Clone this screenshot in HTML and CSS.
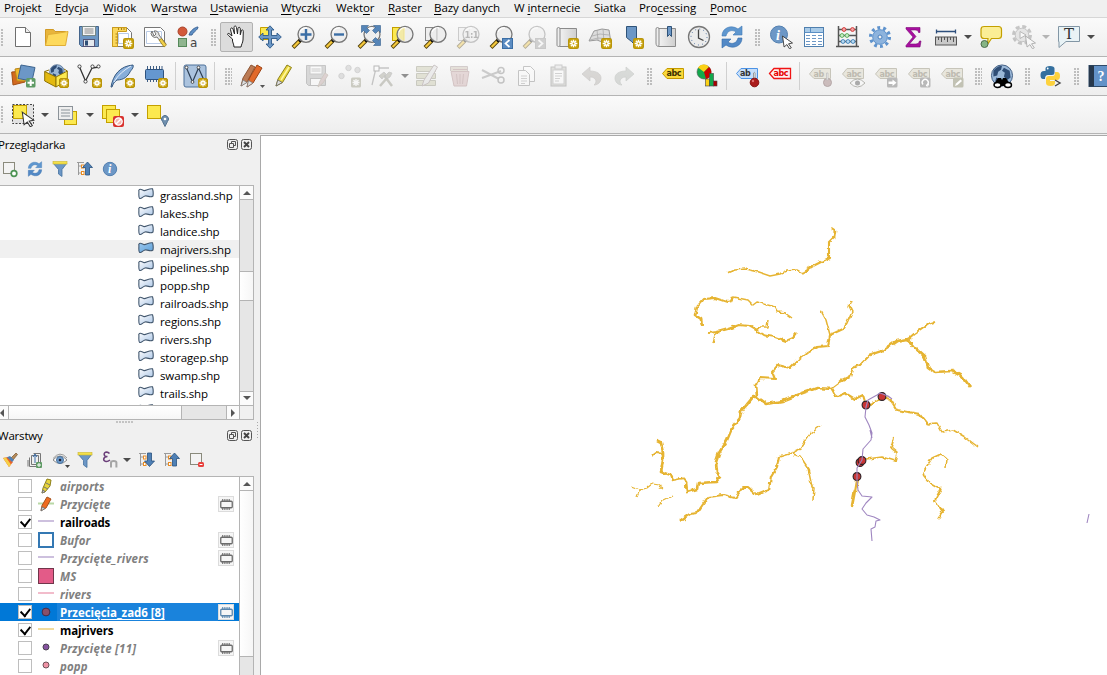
FILE: index.html
```html
<!DOCTYPE html>
<html lang="pl">
<head>
<meta charset="utf-8">
<title>QGIS</title>
<link rel="stylesheet" href="styles.css">
</head>
<body>
<svg class="defs" width="0" height="0">
  <defs>
    <linearGradient id="polyG" x1="0" y1="0" x2="1" y2="1"><stop offset="0" stop-color="#fdfdfe"/><stop offset="1" stop-color="#a9c5e6"/></linearGradient>
    <linearGradient id="polyB" x1="0" y1="0" x2="1" y2="1"><stop offset="0" stop-color="#9cc8ee"/><stop offset="1" stop-color="#5c9fd8"/></linearGradient>
    <linearGradient id="greyG" x1="0" y1="0" x2="1" y2="0"><stop offset="0" stop-color="#f2f2f2"/><stop offset="1" stop-color="#cfcfcf"/></linearGradient>
    <filter id="rough" x="-2%" y="-2%" width="104%" height="104%"><feTurbulence type="fractalNoise" baseFrequency="0.16" numOctaves="2" seed="4"/><feDisplacementMap in="SourceGraphic" scale="4.500" xChannelSelector="R" yChannelSelector="G"/></filter>
  </defs>
  <symbol id="star" viewBox="0 0 10 10"><rect x=".5" y=".5" width="9" height="9" rx="1.500" fill="#c8a20c" stroke="#b8940a"/><path d="M5 1.500v7M1.500 5h7M2.600 2.600l4.800 4.800M7.400 2.600L2.600 7.400" stroke="#fff" stroke-width="1.300"/><circle cx="5" cy="5" r=".8" fill="#c8a20c"/></symbol>
  <symbol id="mag" viewBox="0 0 24 24"><path d="M9.500 15L2 22.500" stroke="#55430c" stroke-width="4"/><path d="M8.500 16L2.600 22" stroke="#f5c93c" stroke-width="2.300"/><circle cx="9.300" cy="15.300" r="1.900" fill="#111"/><circle cx="15" cy="9.300" r="8" fill="#ececec" fill-opacity=".85" stroke="#777" stroke-width="1.300"/><path d="M9 7a7 7 0 0 1 7-4" stroke="#fff" stroke-width="1.200" fill="none"/></symbol>
  <symbol id="refresh" viewBox="0 0 24 24"><path d="M2 11C2 3 11-1 18 4L22 1v9h-9l3-3c-4-3-9-1-10 4z" fill="#5f97cf" stroke="#3f78b6" stroke-width=".6"/><path d="M22 13c0 8-9 12-16 7l-4 3v-9h9l-3 3c4 3 9 1 10-4z" fill="#5389c6" stroke="#2f69a8" stroke-width=".6"/></symbol>
  <symbol id="tag" viewBox="0 0 24 24"><path d="M1.500 10L6 4.500h16.500v10H6z" fill="#e8e6dd" stroke="#c7c5ba"/></symbol>
  <symbol id="poly" viewBox="0 0 16 12"><path d="M.8 2.200C2.500-.2 3.800 2.300 6 2.600S11 .2 14.500.8Q15.600 4 15 8C12 10.300 10 7.200 7 8S3.500 11.500 1.500 10.300C.2 9 1.200 5 .8 2.200Z" stroke="#42576e" stroke-width="1.100"/></symbol>
  <symbol id="chip" viewBox="0 0 12 10"><rect x=".7" y="2" width="10.600" height="6" rx="1" fill="none" stroke="currentColor" stroke-width="1.200"/><path d="M2.500 0v2M4.500 0v2M6.500 0v2M8.500 0v2M2.500 8v2M4.500 8v2M6.500 8v2M8.500 8v2" stroke="currentColor"/></symbol>
  <symbol id="float" viewBox="0 0 11 11"><rect x=".5" y=".5" width="10" height="10" rx="2" fill="none" stroke="#555"/><path d="M4.500 4.500v-2h4v4h-2M2.500 4.500h4v4h-4z" fill="none" stroke="#555"/></symbol>
  <symbol id="close" viewBox="0 0 11 11"><rect x=".5" y=".5" width="10" height="10" rx="2" fill="none" stroke="#555"/><path d="M3 3l5 5M8 3l-5 5" stroke="#444" stroke-width="1.900"/></symbol>
  <symbol id="funnel" viewBox="0 0 16 16"><path d="M1 2h14L10 8.500V15.500L6.500 13V8.500Z" fill="#6c97c6" stroke="#44719f" stroke-width=".8"/><rect x="1" y=".5" width="14" height="2.500" fill="#f4e04a" stroke="#cdb72a" stroke-width=".6"/></symbol>
  <symbol id="treeico" viewBox="0 0 16 16"><path d="M1.500 1v13M1.500 5h4M1.500 12h4M0 1.500h7" fill="none" stroke="#9a9a9a"/><rect x="4.500" y="4" width="2.500" height="3" fill="#fff" stroke="#e98b22"/><rect x="4.500" y="10.500" width="2.500" height="3" fill="#fff" stroke="#e98b22"/></symbol>
  <symbol id="cursor" viewBox="0 0 12 14"><path d="M1 1l10 7-4 .8 2.800 4-1.800 1-2.600-4.200L2.600 12Z" fill="#fff" stroke="#333" stroke-width=".9"/></symbol>
  <symbol id="globe" viewBox="0 0 24 24"><circle cx="12" cy="12" r="11" fill="#9bb8d8" stroke="#3d5a80"/><path d="M3 7c4-5 7-5 9-5l-1 4-3 2-1 4-4 1zM14 4l6 3 1 7-4 3-3-4 1-4-3-2zM6 14l5 2-2 5-4-3z" fill="#2f4d75"/></symbol>
</svg>

<nav class="menubar">
  <span>Pro<u>j</u>ekt</span><span><u>E</u>dycja</span><span><u>W</u>idok</span><span>W<u>a</u>rstwa</span><span><u>U</u>stawienia</span><span><u>W</u>tyczki</span><span>Wekt<u>o</u>r</span><span><u>R</u>aster</span><span><u>B</u>azy danych</span><span>W <u>i</u>nternecie</span><span>Siatka</span><span>Pro<u>c</u>essing</span><span><u>P</u>omoc</span>
</nav>

<div class="toolbar">
  <i class="grip first"></i>
  <b class="tb"><svg viewBox="0 0 24 24"><path d="M4.500 2.500h10l5 5v14h-15z" fill="#fff" stroke="#6e6e6e"/><path d="M14.500 2.500v5h5" fill="#eee" stroke="#6e6e6e"/></svg></b>
  <b class="tb"><svg viewBox="0 0 24 24"><path d="M1.500 20.500V4.500h8l1.500 2h10.500v3" fill="#e8b53c" stroke="#d19a25"/><path d="M1.500 20.500L4 9.500l8-1 12-2-2.500 14z" fill="#fdd95c" stroke="#e0ae35"/></svg></b>
  <b class="tb"><svg viewBox="0 0 24 24"><path d="M2.500 1.500h19v20h-17l-2-2z" fill="#6d97c5" stroke="#45658c"/><rect x="5.500" y="1.500" width="13" height="9" fill="#f5f5f5" stroke="#788"/><path d="M7.500 4h9M7.500 6h9M7.500 8h9" stroke="#888"/><rect x="6.500" y="14.500" width="11" height="7" fill="#e4e9ee" stroke="#557"/><rect x="8" y="15.500" width="3" height="5" fill="#2f4f77"/></svg></b>
  <b class="tb"><svg viewBox="0 0 24 24"><path d="M2.500 2.500h14l5 5v14h-19z" fill="#fff" stroke="#777"/><path d="M8.500 8.500h10v10h-10z" fill="#fff" stroke="#b9cbe6"/><path d="M2.500 2.500h14v4h-9v15h-5z" fill="#fbd75a" stroke="#c99b1c"/><path d="M5.500 9h2M5.500 12h2M5.500 15h2M5.500 18h2M8.500 3v2M11.500 3v2M14 3v2" stroke="#a8801a"/><use href="#star" x="13" y="13" width="11" height="11"/></svg></b>
  <b class="tb"><svg viewBox="0 0 24 24"><path d="M1.500 2.500h16l4 4v15h-20z" fill="#fff" stroke="#777"/><path d="M3.500 6.500h15v12h-15z" fill="none" stroke="#b9cbe6"/><path d="M9 6a4 4 0 0 0 5 6l7 9 2-2-7-9a4 4 0 0 0-5-4l2 3-2 2z" fill="#e6e6e6" stroke="#666" stroke-width=".9"/><path d="M16 15l5 7 2.500-2-5-6.500z" fill="#f0cf4a" stroke="#8e7417" stroke-width=".7"/></svg></b>
  <b class="tb"><svg viewBox="0 0 24 24"><circle cx="6.500" cy="6.500" r="4.500" fill="#d2593a" stroke="#a9442b"/><path d="M13 10c1-4 6-8 9-8 0 3-5 5-6 8z" fill="#5f8fc5" stroke="#3c6597"/><rect x="2.500" y="13.500" width="8" height="8" fill="#8fb58f" stroke="#55895a"/><text x="14" y="21.500" class="sa">a</text></svg></b>
  <i class="grip"></i>
  <b class="tb pressed"><svg viewBox="0 0 24 24"><path d="M7.500 14L3.500 10.500C2 9.500 2.500 8 4 8.500L7 11 5.500 4.500c0-2 2-2 2.500-.3L9.500 9 9 2.500c0-2 2.200-2 2.500 0L12.500 9l.5-5.500c.3-1.800 2.300-1.500 2.300.3l0 6 1-4c.5-1.500 2.200-1 2 .5L18 15c-.3 3-1.500 4-2 7H9c0-3-2-5-1.500-8z" fill="#fff" stroke="#222"/></svg></b>
  <b class="tb"><svg viewBox="0 0 24 24"><path d="M2.500 2.500h11v12h-11z" fill="#fce94f" stroke="#c4a000"/><path d="M12 .8l4 4.200h-2.500v5.500H19V8l4.300 4L19 16v-2.500h-5.500V19H16l-4 4.200L8 19h2.500v-5.500H5V16L.7 12 5 8v2.500h5.500V5H8z" fill="#6c97c6" stroke="#2e5a8a" stroke-width=".9"/></svg></b>
  <b class="tb"><svg viewBox="0 0 24 24"><use href="#mag" width="24" height="24"/><path d="M15 4v11M9.500 9.500h11" stroke="#3b6ea5" stroke-width="2.400"/></svg></b>
  <b class="tb"><svg viewBox="0 0 24 24"><use href="#mag" width="24" height="24"/><path d="M10 9.500h10" stroke="#3b6ea5" stroke-width="2.400"/></svg></b>
  <b class="tb"><svg viewBox="0 0 24 24"><use href="#mag" width="24" height="24"/><g fill="#5585b8" stroke="#365f8d" stroke-width=".6"><path d="M4.500.5h7l-2 2 3 3-3 3-3-3-2 2z"/><path d="M23.500.5h-7l2 2-3 3 3 3 3-3 2 2z"/><path d="M23.500 20.500h-7l2-2-3-3 3-3 3 3 2-2z"/></g></svg></b>
  <b class="tb"><svg viewBox="0 0 24 24"><rect x="2.500" y="2.500" width="11" height="13" fill="#fce94f" stroke="#c4a000"/><use href="#mag" width="24" height="24"/><path d="M15 3h-2a7 7 0 0 0-1 12l3 1z" fill="#fce94f" opacity=".35"/></svg></b>
  <b class="tb"><svg viewBox="0 0 24 24"><rect x="2.500" y="2.500" width="11" height="13" fill="#eee" stroke="#888"/><use href="#mag" width="24" height="24"/><path d="M14 3v12.500" fill="none" stroke="#c4c4c4"/></svg></b>
  <b class="tb off"><svg viewBox="0 0 24 24"><rect x="2.500" y="2.500" width="11" height="13" fill="#eee" stroke="#888"/><use href="#mag" width="24" height="24"/><text x="8.500" y="13" class="oo">1:1</text></svg></b>
  <b class="tb"><svg viewBox="0 0 24 24"><use href="#mag" width="24" height="24"/><rect x="13.500" y="13.500" width="10" height="10" fill="#5b8cc2" stroke="#3b6ea5"/><path d="M20.500 15l-4 3.500 4 3.500" fill="none" stroke="#fff" stroke-width="1.700"/></svg></b>
  <b class="tb off"><svg viewBox="0 0 24 24"><use href="#mag" width="24" height="24"/><rect x="13.500" y="13.500" width="10" height="10" fill="#999" stroke="#888"/><path d="M16.500 15l4 3.500-4 3.500" fill="none" stroke="#fff" stroke-width="1.700"/></svg></b>
  <b class="tb"><svg viewBox="0 0 24 24"><path d="M4.500 3.500h17v18h-17z" fill="url(#greyG)" stroke="#8b8b8b"/><path d="M2 16V4a1.500 1.500 0 0 1 3 0v16c0 2-3 2-3 0z" fill="#eee" stroke="#8b8b8b"/><use href="#star" x="13" y="13" width="11" height="11"/></svg></b>
  <b class="tb"><svg viewBox="0 0 24 24"><path d="M1 16L6 6l8-2 7 1 2 13-9-1-5-2z" fill="#ddd" stroke="#999"/><path d="M4 11l8-2 9 1M9 5l1 10M15 4l1 13M2 15l8-2 12 1" stroke="#aaa" fill="none" stroke-width=".8"/><use href="#star" x="13" y="13" width="11" height="11"/></svg></b>
  <b class="tb"><svg viewBox="0 0 24 24"><path d="M5.500 1.500h10v20l-5-5-5-4z" fill="#6c97c6" stroke="#2f5379"/><use href="#star" x="12" y="13" width="11" height="11"/></svg></b>
  <b class="tb"><svg viewBox="0 0 24 24"><path d="M4.500 3.500h17v18h-17z" fill="url(#greyG)" stroke="#8b8b8b"/><path d="M2 18V4a1.500 1.500 0 0 1 3 0v16c0 2-3 2-3-2z" fill="#eee" stroke="#8b8b8b"/><path d="M13.500 1.500h4v10l-2-2-2 2z" fill="#6c97c6" stroke="#2f5379"/></svg></b>
  <b class="tb"><svg viewBox="0 0 24 24"><circle cx="12" cy="12" r="10.500" fill="#ececec" stroke="#777" stroke-width="1.300"/><circle cx="12" cy="12" r="8" fill="none" stroke="#4c6f9f" stroke-dasharray="1 3.190"/><path d="M11.500 4.500V13l5 2.500" fill="none" stroke="#444" stroke-width="1.300"/></svg></b>
  <b class="tb"><svg viewBox="0 0 24 24"><use href="#refresh" width="24" height="24"/></svg></b>
  <i class="grip"></i>
  <b class="tb"><svg viewBox="0 0 24 24"><circle cx="10" cy="9.500" r="8.500" fill="#6c97c6" stroke="#5380b0"/><text x="7" y="14.500" class="inf">i</text><use href="#cursor" x="12.500" y="10" width="12" height="14"/></svg></b>
  <b class="tb"><svg viewBox="0 0 24 24"><rect x="2.500" y="2.500" width="19" height="19" fill="#fff" stroke="#4f7fae"/><rect x="3" y="3" width="18" height="4" fill="#a9cbe8"/><path d="M2.500 7.500h19M8.500 3v4" stroke="#5b8fc4"/><path d="M4 10.500h4M10 10.500h4M16 10.500h4M4 13.500h4M10 13.500h4M16 13.500h4M4 16.500h4M10 16.500h4M16 16.500h4M4 19.500h4M10 19.500h4M16 19.500h4" stroke="#6d98c6"/></svg></b>
  <b class="tb"><svg viewBox="0 0 24 24"><path d="M3.500 1v20M21.500 1v20M3 4.500h19M3 10.500h19M3 16.500h19M1 21.500h23" stroke="#555" stroke-width="1.500"/><g fill="#f6a6a6" stroke="#d23c3c"><circle cx="9" cy="4.500" r="1.900"/><circle cx="17.500" cy="4.500" r="1.900"/></g><g fill="#c8f0c8" stroke="#5fae5f"><circle cx="7" cy="10.500" r="1.900"/><circle cx="12" cy="10.500" r="1.900"/></g><g fill="#b9dcf5" stroke="#4a88bb"><circle cx="8" cy="16.500" r="1.900"/><circle cx="13" cy="16.500" r="1.900"/><circle cx="18" cy="16.500" r="1.900"/></g></svg></b>
  <b class="tb"><svg viewBox="0 0 24 24"><circle cx="12" cy="12" r="9.300" fill="none" stroke="#5f93cd" stroke-width="3.500" stroke-dasharray="2.800 3.043"/><circle cx="12" cy="12" r="7.300" fill="#8db3dd" stroke="#5f93cd" stroke-width="1"/><circle cx="12" cy="12" r="2" fill="#f2f2f2" stroke="#4a80bf"/></svg></b>
  <b class="tb"><svg viewBox="0 0 24 24"><path d="M5 2.500h14v5h-1.500c-.5-2-1.500-2.500-4-2.500H9.500l5.500 6.500-6.500 7.500h6c2.500 0 3.500-1 4-3H20l-1 6H5v-1.500L12 12 5 4z" fill="#a80fa0" stroke="#7b0a76" stroke-width=".6"/></svg></b>
  <b class="tb"><svg viewBox="0 0 24 24"><path d="M2 6.500h20M2.500 4.500v4M21.500 4.500v4" stroke="#2e4f7c" stroke-width="1.300"/><rect x="1.500" y="12" width="21" height="8" fill="#c9c9c9" stroke="#555"/><path d="M4.500 12v3M7.500 12v5M10.500 12v3M13.500 12v5M16.500 12v3M19.500 12v5" stroke="#555"/></svg></b>
  <i class="arr"></i>
  <b class="tb"><svg viewBox="0 0 24 24"><path d="M4.500 1.500h15q3 0 3 3v6q0 3-3 3h-7l-4 6 .5-6h-4q-3 0-3-3v-6q0-3 3-3z" fill="#fbee95" stroke="#c4a000" stroke-width="1.200"/><circle cx="5.500" cy="19" r="3.500" fill="#86b586" stroke="#4e6e4e"/></svg></b>
  <b class="tb off"><svg viewBox="0 0 24 24"><circle cx="10" cy="10" r="8.500" fill="none" stroke="#777" stroke-width="3" stroke-dasharray="4 2.670"/><circle cx="10" cy="10" r="6.800" fill="#ccc" stroke="#777"/><path d="M8 6.500l6 3.500-6 3.500z" fill="#fff" stroke="#555"/><use href="#cursor" x="12.500" y="10" width="12" height="14"/></svg></b>
  <i class="arr dim"></i>
  <b class="tb"><svg viewBox="0 0 24 24"><path d="M1.500 1.500h21v15H9l-7 6v-6h-.5z" fill="#e9f3f6" stroke="#8296a5"/><text x="7" y="14" class="tt">T</text></svg></b>
  <i class="arr"></i>
</div>

<div class="toolbar">
  <i class="grip first"></i>
  <b class="tb"><svg viewBox="0 0 24 24"><path d="M.7 8l12-1 1.300 11-12 3z" fill="#d2691e" stroke="#a34e12"/><path d="M4 5l12-2v14H6z" fill="#f0b92c" stroke="#b98416"/><path d="M10 1l14 2.500-3 13.500-14-2.500z" fill="#6c97c6" stroke="#3d648f"/><rect x="15" y="14" width="9.500" height="9.500" rx="1.500" fill="#5f9b65"/><path d="M19.700 15.500v6.500M16.500 18.700H23" stroke="#fff" stroke-width="2"/></svg></b>
  <b class="tb"><svg viewBox="0 0 24 24"><use href="#globe" x="5" y="0" width="16" height="16"/><path d="M.7 7.500L12 13v10L.7 17z" fill="#e3b90f" stroke="#8f7406"/><path d="M12 13l11.300-6v9L12 23z" fill="#fce94f" stroke="#8f7406"/><path d="M.7 7.500L5 6M23.300 7L20 5" stroke="#8f7406"/><use href="#star" x="15" y="14" width="10" height="10"/></svg></b>
  <b class="tb"><svg viewBox="0 0 24 24"><path d="M2.500 3l6 14 6.500-13 7-1" fill="none" stroke="#333" stroke-width="1.300"/><g fill="#fff" stroke="#444"><circle cx="2.500" cy="2.500" r="1.600"/><circle cx="8.500" cy="17.500" r="1.600"/><circle cx="15.500" cy="2.500" r="1.600"/><circle cx="21.500" cy="2.500" r="1.600"/></g><use href="#star" x="15" y="14" width="10" height="10"/></svg></b>
  <b class="tb"><svg viewBox="0 0 24 24"><path d="M1 23C3 11 10 2 23 1c1 3-2 5-3 7-2 4-6 8-13 8-3 2-4 4-5 7z" fill="#87aeda" stroke="#34577f"/><path d="M4 18C8 11 14 6 21 2" fill="none" stroke="#e5eefa"/><use href="#star" x="15" y="14" width="10" height="10"/></svg></b>
  <b class="tb"><svg viewBox="0 0 24 24"><path d="M4.500 2v16M7.500 2v16M10.500 2v16M13.500 2v16M16.500 2v16M19 2v14" stroke="#405f85"/><rect x="2.500" y="5.500" width="18" height="10" rx="1" fill="#6597cf" stroke="#2e527e"/><use href="#star" x="15" y="14" width="10" height="10"/></svg></b>
  <i class="sep"></i>
  <b class="tb m-1"><svg viewBox="0 0 24 24"><rect x="1" y="1" width="22" height="22" rx="2" fill="#abc3de" stroke="#4d7099"/><path d="M3.500 4l6 14 6-14 5 11" fill="none" stroke="#2d3e53" stroke-width="1.200"/><g fill="#fff" stroke="#333" stroke-width=".8"><circle cx="3.500" cy="3.500" r="1.400"/><circle cx="9.500" cy="18" r="1.400"/><circle cx="15.500" cy="3.500" r="1.400"/></g><use href="#star" x="15" y="14" width="10" height="10"/></svg></b>
  <i class="sep s7"></i>
  <i class="grip g17"></i>
  <b class="tb"><svg viewBox="0 0 24 24"><path d="M1 22l2-8L11 1l4 2-8 15z" fill="#bb7a54" stroke="#8d5635"/><path d="M7 23l2-8L17 1l5 3-9 15z" fill="#e2692a" stroke="#9c4314"/><path d="M1 22l2-6 4 2.500zM7 23l1.500-6.500L13 19z" fill="#ddd" stroke="#777" stroke-width=".7"/><path d="M20 21h5l-2.500 3z" fill="#555"/></svg></b>
  <b class="tb m-1"><svg viewBox="0 0 24 24"><path d="M4 22l2-7L15 1l4.500 2.500-9 15z" fill="#e8d53c" stroke="#8e811b"/><path d="M9 16L17 3" stroke="#fff6a0" stroke-width="1.500"/><path d="M4 22l1.800-6 4.500 2.500z" fill="#ddd" stroke="#666" stroke-width=".8"/></svg></b>
  <b class="tb off"><svg viewBox="0 0 24 24"><path d="M1.500 1.500h19v20h-17l-2-2z" fill="#aaa" stroke="#777"/><rect x="5" y="2" width="12" height="8" fill="#fff" stroke="#888"/><path d="M6.500 5h9M6.500 7h9" stroke="#888"/><rect x="5.500" y="14.500" width="11" height="7" fill="#fff" stroke="#777"/><path d="M13 23l2-6 5-8 3 2-5 8z" fill="#b99a9a" stroke="#987"/></svg></b>
  <b class="tb off"><svg viewBox="0 0 24 24"><g fill="#bbb" stroke="#999"><circle cx="10.500" cy="4" r="2.700"/><circle cx="19.500" cy="6" r="2.700"/><circle cx="3.500" cy="12" r="2.700"/></g><rect x="13" y="13.500" width="10" height="10" rx="1.500" fill="#8d8d75"/><path d="M18 15v7M14.500 18.500h7M15.500 16l5 5M20.500 16l-5 5" stroke="#fff" stroke-width="1.300"/></svg></b>
  <b class="tb off"><svg viewBox="0 0 24 24"><path d="M1 21L5 4h13" fill="none" stroke="#777" stroke-width="1.300"/><rect x="3" y="2" width="5" height="5" fill="#fff" stroke="#555"/><path d="M9 22l7-8M12 10l9 12" fill="none" stroke="#888878" stroke-width="2.500"/><path d="M8 12l5-4 2 2-4 5zM14 12l4-4 3 1-2 4-3 2z" fill="#99998a" stroke="#777" stroke-width=".7"/></svg></b>
  <i class="arr mid"></i>
  <b class="tb off"><svg viewBox="0 0 24 24"><path d="M1.500 2.500h19v5h-19zM1.500 9.500h19v5h-19zM1.500 16.500h19v5h-19z" fill="#c3c3a3" stroke="#888870"/><path d="M7 22l2-6L19 1l3.500 2-9 16z" fill="#ddd" stroke="#877"/></svg></b>
  <b class="tb off"><svg viewBox="0 0 24 24"><path d="M2.500 7V2.500h17V7" fill="#c9bba9" stroke="#988"/><path d="M3 7.500h18l-2.500 14.500H6z" fill="#cba8a8" stroke="#a07878"/><path d="M8.500 10l1 10M12 10v10M15.500 10l-1 10M5 5.500h14" stroke="#a07878"/></svg></b>
  <b class="tb off"><svg viewBox="0 0 24 24"><path d="M1 6l17 9M1 14L20 7" stroke="#888" stroke-width="2"/><circle cx="20" cy="6.500" r="3" fill="none" stroke="#777" stroke-width="1.500"/><circle cx="20" cy="16" r="3" fill="none" stroke="#777" stroke-width="1.500"/></svg></b>
  <b class="tb off"><svg viewBox="0 0 24 24"><path d="M9.500 2.500h7l4 4v11h-11z" fill="#fff" stroke="#777"/><path d="M4.500 6.500h7l4 4v11h-11z" fill="#fff" stroke="#777"/><path d="M7 12h6M7 14.500h6M7 17h6M7 19.500h4" stroke="#999"/></svg></b>
  <b class="tb off"><svg viewBox="0 0 24 24"><rect x="4" y="3" width="15" height="19" fill="#bdbdb5" stroke="#777"/><rect x="6" y="6" width="11" height="14" fill="#fff" stroke="#999"/><rect x="8" y="1" width="7" height="4" fill="#ddd" stroke="#888"/><path d="M8 9.500h7M8 12h7M8 14.500h5M8 17h4" stroke="#999"/></svg></b>
  <b class="tb off"><svg viewBox="0 0 24 24"><path d="M2 10l8-7v4c7 0 11 3 11 7s-3 7-7 7c3-2 3-8-4-8v4z" fill="#aba7a2" stroke="#8e8a86" stroke-width=".7"/></svg></b>
  <b class="tb off"><svg viewBox="0 0 24 24"><path d="M21 10l-8-7v4C6 7 2 10 2 14s3 7 7 7c-3-2-3-8 4-8v4z" fill="#aab0aa" stroke="#8e928e" stroke-width=".7"/></svg></b>
  <i class="grip g15"></i>
  <b class="tb"><svg viewBox="0 0 24 24"><path d="M1.500 9.500L6 4.500h16.500v10H6z" fill="#fad93b" stroke="#c49a00"/><text x="5.500" y="12.300" class="abc" fill="#3b2f00">abc</text></svg></b>
  <b class="tb p1"><svg viewBox="0 0 24 24"><circle cx="9" cy="8" r="7" fill="#12a84c" stroke="#555" stroke-width=".6"/><path d="M9 8L3 3.500A7 7 0 0 1 14 3z" fill="#fcd116"/><path d="M9 8l5-5a7 7 0 0 1-3 12z" fill="#c80000"/><g stroke="#444" stroke-width=".6"><rect x="10.500" y="15" width="4" height="7" fill="#fcd116"/><rect x="14.500" y="9.500" width="4" height="12.500" fill="#12a84c"/><rect x="18.500" y="17" width="3.500" height="5" fill="#a00"/></g></svg></b>
  <i class="sep s7"></i>
  <b class="tb"><svg viewBox="0 0 24 24"><path d="M1.500 9.500L6 4.500h16.500v10H6z" fill="#c6defa" stroke="#4c93e6"/><text x="5" y="12.300" class="abc" fill="#333">ab</text><path d="M18.500 9q1-1.500 1.500 0v7h-1.500z" fill="#fff" stroke="#777" stroke-width=".7"/><circle cx="19.500" cy="18.500" r="4.300" fill="#ab1c1c" stroke="#811"/><circle cx="18" cy="17" r="1.200" fill="#e07070"/></svg></b>
  <b class="tb"><svg viewBox="0 0 24 24"><path d="M1.500 9.500L6 4.500h16.500v10H6z" fill="#fdf2f2" stroke="#f01414" stroke-width="1.300"/><text x="5.500" y="12.300" class="abc" fill="#e80000">abc</text></svg></b>
  <i class="sep s7"></i>
  <b class="tb"><svg viewBox="0 0 24 24"><use href="#tag" width="24" height="24"/><text x="5.500" y="12.500" class="abc" fill="#bdbab0">ab</text><circle cx="19.500" cy="18.500" r="4" fill="#cbbcbc" stroke="#b5a8a8"/><path d="M18.500 9h1.500v7h-1.500z" fill="#eee" stroke="#bbb" stroke-width=".7"/></svg></b>
  <b class="tb"><svg viewBox="0 0 24 24"><use href="#tag" width="24" height="24"/><text x="5.500" y="12.500" class="abc" fill="#bdbab0">abc</text><path d="M9 19q7.500-8 15 0-7.500 8-15 0z" fill="#f6f6f6" stroke="#b5b5b0"/><circle cx="16.500" cy="19" r="2.500" fill="#aaa"/></svg></b>
  <b class="tb"><svg viewBox="0 0 24 24"><use href="#tag" width="24" height="24"/><text x="5.500" y="12.500" class="abc" fill="#bdbab0">abc</text><rect x="13" y="13.500" width="10.500" height="10" rx="1.500" fill="#b9b9b9"/><path d="M14.500 17.500h4v-2l4 3.300-4 3.200v-2h-4z" fill="#fff"/></svg></b>
  <b class="tb"><svg viewBox="0 0 24 24"><use href="#tag" width="24" height="24"/><text x="5.500" y="12.500" class="abc" fill="#bdbab0">abc</text><rect x="13" y="13.500" width="10.500" height="10" rx="1.500" fill="#b9b9b9"/><path d="M16 20.500a3 3 0 1 1 4.500 0v2M22 20.500l-3 1" fill="none" stroke="#fff" stroke-width="1.400"/></svg></b>
  <b class="tb"><svg viewBox="0 0 24 24"><use href="#tag" width="24" height="24"/><text x="5.500" y="12.500" class="abc" fill="#bdbab0">abc</text><rect x="13" y="13.500" width="10.500" height="10" rx="1.500" fill="#c2c2b4"/><path d="M15 22l1-2.500 4.500-4 1.500 1.500-4.500 4z" fill="#fff"/></svg></b>
  <i class="grip g17"></i>
  <b class="tb"><svg viewBox="0 0 24 24"><use href="#globe" x="0" y="0" width="24" height="23"/><path d="M4 20l4-6h3l1 2 1-2h3l4 6-2 2H6z" fill="#000"/><ellipse cx="7.500" cy="21" rx="3.500" ry="2.500" fill="#fff" stroke="#000" stroke-width="1.400"/><ellipse cx="18" cy="21" rx="3.500" ry="2.500" fill="#fff" stroke="#000" stroke-width="1.400"/></svg></b>
  <i class="grip"></i>
  <b class="tb"><svg viewBox="0 0 24 24"><path d="M6.500 7V4.500Q6.500 2 11 2t4.500 2.500V9Q15.500 11 13 11H9q-3 0-3 4H4Q1.500 15 1.500 11T5 7h6" fill="#35709f"/><path d="M16 8h2q3 0 3 4t-3 4h-7v1h5v2q0 3-4.500 3T7 19v-4q0-3 3-3h4q2 0 2-4z" fill="#fdd23e"/><circle cx="8.700" cy="4.500" r=".9" fill="#fff"/><path d="M16 16l5 3-5 3" fill="none" stroke="#444" stroke-width="1.400"/></svg></b>
  <i class="grip"></i>
  <b class="tb"><svg viewBox="0 0 24 24"><rect x="1" y="1.500" width="24" height="21" fill="#6392c8" stroke="#2f4a68"/><rect x="1" y="1.500" width="5" height="21" fill="#27384c"/><text x="9.500" y="17" class="qm">?</text></svg></b>
</div>

<div class="toolbar third">
  <i class="grip first"></i>
  <b class="tb"><svg viewBox="0 0 24 24"><rect x="1.500" y="1.500" width="21" height="19" fill="#e2e2e2" stroke="#444" stroke-dasharray="2 1.500"/><rect x="2.500" y="2.500" width="13" height="13" fill="#fce94f" stroke="#c4a000"/><use href="#cursor" x="10" y="8" width="14" height="16"/></svg></b>
  <i class="arr"></i>
  <b class="tb shift"><svg viewBox="0 0 24 24"><rect x="8.500" y="8.500" width="12" height="13" fill="#fce94f" stroke="#c4a000"/><rect x="2.500" y="3.500" width="14" height="13" fill="#eee" stroke="#8c9399"/><path d="M5 7h9M5 10h9M5 13h9" stroke="#8c9399" stroke-width="1.200"/></svg></b>
  <i class="arr"></i>
  <b class="tb shift"><svg viewBox="0 0 24 24"><rect x="1.500" y="2.500" width="13" height="13" fill="#fce94f" stroke="#c4a000"/><rect x="5.500" y="6.500" width="13" height="13" fill="#fce94f" stroke="#c4a000"/><rect x="12" y="13" width="11" height="11" rx="2" fill="#d8322e"/><circle cx="17.500" cy="18.500" r="3.700" fill="#f4b5b0" stroke="#fff" stroke-width="1.300"/><path d="M15 21l5-5" stroke="#fff" stroke-width="1.500"/></svg></b>
  <i class="arr"></i>
  <b class="tb shift"><svg viewBox="0 0 24 24"><rect x="1.500" y="2.500" width="13" height="13" fill="#fce94f" stroke="#c4a000"/><path d="M19 23.500l-2.500-5a3.500 3.500 0 1 1 5 0z" fill="#6f8fae" stroke="#557390"/><circle cx="19" cy="16" r="1.300" fill="#fff"/></svg></b>
</div>

<main class="work">
  <aside class="docks">
    <header class="dock-title"><span>Przeglądarka</span><svg><use href="#float"/></svg><svg><use href="#close"/></svg></header>
    <div class="dock-tools">
      <svg viewBox="0 0 16 16"><rect x="1.500" y="1.500" width="11" height="11" fill="#f3f3f3" stroke="#8a8a7c"/><circle cx="12" cy="12.500" r="2.800" fill="#fff" stroke="#4e9455" stroke-width="1.700"/></svg>
      <svg viewBox="0 0 16 16"><use href="#refresh" width="16" height="16"/></svg>
      <svg viewBox="0 0 16 16"><use href="#funnel" width="16" height="16"/></svg>
      <svg viewBox="0 0 16 16"><use href="#treeico" width="16" height="16"/><path d="M10.500 1l5 5.500h-3V14h-4V6.500h-3z" fill="#4f80b5" stroke="#28507d" stroke-width=".8"/></svg>
      <svg viewBox="0 0 16 16"><circle cx="8" cy="8" r="6.700" fill="#6c97c6" stroke="#5380b0"/><text x="6" y="12.300" class="inf s">i</text></svg>
    </div>
    <section class="browser">
      <ul class="files">
        <li><svg fill="url(#polyG)"><use href="#poly"/></svg><span>grassland.shp</span></li>
        <li><svg fill="url(#polyG)"><use href="#poly"/></svg><span>lakes.shp</span></li>
        <li><svg fill="url(#polyG)"><use href="#poly"/></svg><span>landice.shp</span></li>
        <li class="hot"><svg fill="url(#polyB)"><use href="#poly"/></svg><span>majrivers.shp</span></li>
        <li><svg fill="url(#polyG)"><use href="#poly"/></svg><span>pipelines.shp</span></li>
        <li><svg fill="url(#polyG)"><use href="#poly"/></svg><span>popp.shp</span></li>
        <li><svg fill="url(#polyG)"><use href="#poly"/></svg><span>railroads.shp</span></li>
        <li><svg fill="url(#polyG)"><use href="#poly"/></svg><span>regions.shp</span></li>
        <li><svg fill="url(#polyG)"><use href="#poly"/></svg><span>rivers.shp</span></li>
        <li><svg fill="url(#polyG)"><use href="#poly"/></svg><span>storagep.shp</span></li>
        <li><svg fill="url(#polyG)"><use href="#poly"/></svg><span>swamp.shp</span></li>
        <li><svg fill="url(#polyG)"><use href="#poly"/></svg><span>trails.shp</span></li>
        <li><svg fill="url(#polyG)"><use href="#poly"/></svg></li>
      </ul>
      <div class="vbar"><i class="btn up"></i><i class="track t1"></i><i class="thumb th1"></i><i class="track grow"></i><i class="btn down"></i></div>
      <div class="hbar"><i class="btn left"></i><i class="thumb"></i><i class="track"></i><i class="btn right"></i></div>
      <div class="corner"></div>
    </section>
    <div class="split"></div>
    <header class="dock-title low"><span>Warstwy</span><svg><use href="#float"/></svg><svg><use href="#close"/></svg></header>
    <div class="dock-tools low">
      <svg viewBox="0 0 16 16"><path d="M9 6l5-5 1.500 1.500L11 8z" fill="#b58a5a" stroke="#76552c" stroke-width=".7"/><path d="M1 6l5-1 5 5-4 5z" fill="#e8642c"/><path d="M1 6l3-.6 5 7L7 15z" fill="#f6cf46"/><path d="M5 5.300L8 4l4 4-2 2z" fill="#4f80b5"/></svg>
      <svg viewBox="0 0 16 16"><path d="M4.500 3.500h7v9h-7zM2.500 5.500v9h7M1 8v6.500M6.500 1.500h7v9" fill="none" stroke="#777"/><path d="M8 11V3M6 5l2-3 2 3" fill="none" stroke="#3c6ea8"/><rect x="9" y="10" width="6" height="6" rx="1" fill="#5f9b65"/><path d="M12 11v4M10 13h4" stroke="#fff"/></svg>
      <svg viewBox="0 0 16 16"><path d="M1 8q7-8 14 0-7 7-14 0z" fill="#fff" stroke="#888"/><path d="M1 6.500Q8-2 15 6" fill="none" stroke="#999"/><circle cx="8" cy="8" r="3.500" fill="#6f9ccb" stroke="#48729f"/><circle cx="8" cy="8" r="1.300" fill="#223"/><path d="M13 13h5l-2.500 3z" fill="#444"/></svg>
      <svg viewBox="0 0 16 16"><use href="#funnel" width="16" height="16"/></svg>
      <svg viewBox="0 0 16 16"><path d="M7.500 1.500C5-1.200 1 .5 2.500 3.500 3 4.500 4 4.500 5.500 4.500 1 4.500.5 9 4 9.500q2 .2 4-1.500" fill="none" stroke="#6b3f7a" stroke-width="1.600"/><path d="M9 15.500V10.500q0-1.500 2.700-1.500t2.700 1.500v5" fill="none" stroke="#a5a5a5" stroke-width="2"/></svg>
      <i class="arr"></i>
      <svg viewBox="0 0 16 16"><use href="#treeico" width="16" height="16"/><path d="M10.500 14.500l5-5.500h-3V1h-4v8h-3z" fill="#4f80b5" stroke="#28507d" stroke-width=".8"/></svg>
      <svg viewBox="0 0 16 16"><use href="#treeico" width="16" height="16"/><path d="M10.500 1l5 5.500h-3V14h-4V6.500h-3z" fill="#4f80b5" stroke="#28507d" stroke-width=".8"/></svg>
      <svg viewBox="0 0 16 16"><rect x="1.500" y="1.500" width="11" height="11" fill="#f3f3f3" stroke="#8a8a7c"/><rect x="9" y="10" width="6" height="5" rx="1.500" fill="#e8403c"/><path d="M10.500 12.500h3" stroke="#fff"/></svg>
    </div>
    <section class="layers">
      <ul class="rows">
        <li><i class="chk"></i><svg class="sym" viewBox="0 0 16 16"><path d="M4 15l1-5 4-9 4 1-1 6-5 6z" fill="#e8d53c" stroke="#8e811b"/><path d="M8 5l4 2M6 9l4 2M4 15l1-3 2 1.500z" fill="#ddd" stroke="#777"/></svg><em>airports</em></li>
        <li><i class="chk"></i><svg class="sym" viewBox="0 0 16 16"><path d="M0 7.500h16" stroke="#b9d8a6" stroke-width="2"/><path d="M3 14.500l1-5L9 1l4 2-5 9z" fill="#ee6b1f" stroke="#a5511c"/><path d="M3 15l1-4 3 1.500z" fill="#ddd" stroke="#777"/></svg><em>Przycięte</em><b class="mem"><svg><use href="#chip"/></svg></b></li>
        <li><i class="chk on"></i><svg class="sym" viewBox="0 0 16 16"><path d="M0 7h16" stroke="#cdc0de" stroke-width="2"/></svg><strong>railroads</strong></li>
        <li><i class="chk"></i><svg class="sym" viewBox="0 0 16 16"><rect x="1" y="1" width="14" height="14" fill="#fff" stroke="#3478b3" stroke-width="2"/></svg><em>Bufor</em><b class="mem"><svg><use href="#chip"/></svg></b></li>
        <li><i class="chk"></i><svg class="sym" viewBox="0 0 16 16"><path d="M0 7h16" stroke="#cdc0de" stroke-width="2"/></svg><em class="wide">Przycięte_rivers</em><b class="mem"><svg><use href="#chip"/></svg></b></li>
        <li><i class="chk"></i><svg class="sym" viewBox="0 0 16 16"><rect x=".5" y=".5" width="15" height="15" fill="#e35b88" stroke="#71364b"/></svg><em>MS</em></li>
        <li><i class="chk"></i><svg class="sym" viewBox="0 0 16 16"><path d="M0 7h16" stroke="#f2bccb" stroke-width="2"/></svg><em>rivers</em></li>
        <li class="sel"><i class="chk on"></i><svg class="sym" viewBox="0 0 16 16"><circle cx="8" cy="8" r="3.900" fill="#8b5068" stroke="#432d49"/></svg><strong><u>Przecięcia_zad6 [8]</u></strong><b class="mem"><svg><use href="#chip"/></svg></b></li>
        <li><i class="chk on"></i><svg class="sym" viewBox="0 0 16 16"><path d="M0 7h16" stroke="#f2dc9d" stroke-width="2"/></svg><strong>majrivers</strong></li>
        <li><i class="chk"></i><svg class="sym" viewBox="0 0 16 16"><circle cx="8" cy="7" r="3" fill="#8653a0" stroke="#4a4350"/></svg><em class="wide">Przycięte [11]</em><b class="mem"><svg><use href="#chip"/></svg></b></li>
        <li><i class="chk"></i><svg class="sym" viewBox="0 0 16 16"><circle cx="8" cy="7" r="3" fill="#ef93a5" stroke="#6d5057"/></svg><em>popp</em></li>
      </ul>
      <div class="vbar"><i class="btn up"></i><i class="thumb th2"></i><i class="track grow"></i></div>
    </section>
  </aside>
  <div class="vsplit"></div>
  <section class="canvas">
    <svg viewBox="261 136 846 539" width="846" height="539" fill="none" stroke-linejoin="round">
      <g filter="url(#rough)" stroke="#e6b432">
        <g stroke-width="1.500">
          <path d="M728 273L735 270 745 269 758 272 770 276 780 274 787 271 797 270 802 273"/>
          <path d="M733 297L748 300 753 305 757 302 775 307 778 312 785 313 792 318"/>
          <path d="M713 343L715 335 719 332M756 329L760 327 767 327 768 321M821 311L826 320 830 335M851 301L849 306 852 312 847 323 843 329"/>
          <path d="M779 457L792 453 800 449 810 434 822 425M792 454L800 456 808 468 812 487 814 488 813 500"/>
          <path d="M867 459L882 457 895 461 897 453 891 448M946 468L947 459 941 454 932 458 923 472 924 476 929 482 941 489"/>
          <path d="M928 424L937 423 942 432 953 430 965 437 978 447"/>
        </g>
        <path stroke-width="1.200" d="M632 487L640 490 647 488 652 484 658 485 663 488M637 497L639 492 644 489M658 507L662 501 672 496"/>
        <g stroke-width="2.100">
          <path d="M802 273L813 266 829 258 829 242 834 237"/>
          <path d="M708 333L717 332 728 329 739 325 749 326 756 330 763 335 775 337 786 341 793 338 797 333"/>
          <path d="M697 307L704 299 715 298 727 302 731 301 733 297"/>
          <path d="M843 329L830 335 828 346 818 347 808 352 799 359 790 368 778 365 772 372 775 379 760 378 756 384"/>
          <path d="M690 514L697 513 708 497 723 495 735 498 743 487 748 487 757 495 769 490 771 477 777 467 779 457"/>
          <path d="M832 389L836 397 845 393 855 399 863 395 866 405 873 403 882 397 890 399 897 410 920 414 928 424"/>
          <path d="M832 388L840 382 850 377 853 368 860 365 870 355M908 339L915 333 928 324 934 322"/>
          <path d="M652 455L656 452 663 453M891 448L894 437M941 489L935 500 943 512 938 519M857 480L855 492"/>
        </g>
        <g stroke-width="2.700">
          <path d="M834 238L835 231 832 229M702 326L701 319 695 315 697 307"/>
          <path d="M756 384L757 397 753 397 748 403 741 412 740 418 732 428 727 440 719 453 716 462 717 472 720 477 716 482 698 483 697 489 687 492 686 482 682 478 672 480 670 475 661 472 663 460 663 452 661 443 657 441"/>
          <path d="M757 397L767 404 782 401 800 394 817 388 832 389M681 520L690 514M870 355L882 351 897 341 908 339 915 348 925 357 928 367 935 372 952 371 963 377 970 387M855 490L852 506"/>
        </g>
      </g>
      <g fill="#c93636" stroke="#2a2226" stroke-width="1.100"><circle cx="866" cy="405" r="3.900"/><circle cx="882" cy="396.500" r="3.900"/><circle cx="860" cy="462.500" r="3.900"/><circle cx="862" cy="460.500" r="3.900"/><circle cx="857" cy="476.500" r="3.900"/></g>
      <path d="M892 399L888 396 880 393 877 395 868 400 866 407 865 417 869 425 872 433 871 440 863 449 862 460 857 468 857 480 858 490 862 496 872 497 866 503 862 509 867 515 874 517 880 520 876 521 875 527 871 529 872 541M870 430L872 438M1089 514L1087 523" stroke="#9f86c0" stroke-width="1.100"/>
    </svg>
  </section>
</main>
</body>
</html>
```
FILE: styles.css
```css
* { box-sizing: border-box; }
body { margin: 0; width: 1107px; height: 675px; overflow: hidden; background: #f0f0f0; color: #000; font: 12px "Open Sans", "Noto Sans", sans-serif; display: flex; flex-direction: column; }
.defs { position: absolute; }
i, b, em { display: block; }
u { text-decoration-thickness: 1px; text-underline-offset: 2px; }

.menubar { flex: none; height: 18px; border-bottom: 1px solid #d6d6d6; display: grid; grid-template-columns: 51px 48px 48px 59px 71px 55px 52px 46px 80px 80px 45px 71px 60px; padding-left: 4px; line-height: 16px; font-size: 11.5px; letter-spacing: -.06px; white-space: nowrap; }

.toolbar { flex: none; height: 39px; border-bottom: 1px solid #b4b4b4; background: linear-gradient(#fafafa, #eeeeee); display: flex; align-items: center; overflow: hidden; }
.toolbar.third { height: 38px; }
.tb { flex: none; width: 33px; height: 30px; display: flex; align-items: center; justify-content: center; }
.tb svg { flex: none; width: 24px; height: 24px; overflow: visible; }
.tb.off svg { opacity: .38; }
.tb.pressed { background: #dcdcdc; border: 1px solid #b2b2b2; border-radius: 2px; }
.m-1 { margin-left: -1px; }
.p1 { margin-left: 1px; }
.shift svg { margin-left: 1px; }
.grip { flex: none; width: 16px; height: 17px; background: radial-gradient(circle at 1px 1px, #a0a0a0 .6px, transparent .9px) 0 0 / 3px 3px content-box content-box; padding: 0 3px 0 7px; }
.grip.first { width: 6px; padding: 0 3px 0 1px; }
.g17 { width: 17px; padding-left: 7px; }
.g15 { width: 15px; padding-left: 6px; }
.sep { flex: none; width: 4px; height: 28px; border-left: 1px solid #d0d0d0; margin-left: 4px; }
.sep.s7 { margin-left: 3px; }
.arr { flex: none; width: 12px; height: 4px; display: flex; justify-content: center; }
.arr::before { content: ""; border: 4px solid transparent; border-top-color: #4c4c4c; border-bottom: 0; }
.dim::before { border-top-color: #b4b4b4; }
.arr.mid { width: 11px; }
.mid::before { border-top-color: #909090; }

.abc { font: bold 8px "DejaVu Sans", sans-serif; letter-spacing: -.4px; }
.oo { font: bold 8.5px "DejaVu Sans", sans-serif; letter-spacing: -.5px; fill: #555; }
.sa { font: 12px "DejaVu Sans", sans-serif; fill: #444; }
.tt { font: 15px "DejaVu Serif", serif; fill: #333; }
.inf { font: italic bold 14px "Liberation Serif", serif; fill: #fff; }
.inf.s { font-size: 12px; }
.qm { font: bold 14px "Liberation Serif", serif; fill: #fff; }

.work { flex: 1; min-height: 0; display: grid; grid-template-columns: 254px 6px 1fr; }
.docks { display: flex; flex-direction: column; min-height: 0; }
.dock-title { flex: none; height: 23px; padding: 0 2px 0 0; display: flex; align-items: center; gap: 3px; line-height: 20px; font-size: 11.5px; letter-spacing: -.2px; }
.dock-title span { flex: 1; margin-left: -2px; padding-bottom: 2px; }
.dock-title svg { width: 11px; height: 11px; margin-bottom: 2px; }
.dock-title.low { height: 24px; }
.dock-title.low svg { margin-bottom: 3px; }
.dock-tools { flex: none; height: 28px; padding: 0 0 4px 2px; display: flex; align-items: center; gap: 9px; }
.dock-tools svg { flex: none; width: 16px; height: 16px; overflow: visible; }
.dock-tools.low { height: 27px; padding-bottom: 5px; }
.dock-tools .arr { margin: 0 -3px 0 -6px; }

.browser { flex: none; height: 235px; border: solid #b4b4b4; border-width: 1px 1px 1px 0; display: grid; grid-template: 219px 14px / 239px 14px; background: #fff; }
ul { list-style: none; margin: 0; padding: 0; overflow: hidden; }
.files li { height: 18px; padding-left: 138px; display: flex; align-items: center; gap: 6px; font-size: 11.5px; line-height: 16px; letter-spacing: -.12px; }
.files span { padding-top: 2px; }
.files svg { width: 16px; height: 12px; margin-bottom: 2px; }
.files .hot { background: #f0f0f0; }

.vbar { display: flex; flex-direction: column; border-left: 1px solid #b4b4b4; min-height: 0; }
.vbar .btn { flex: none; height: 14px; border-bottom: 1px solid #b4b4b4; display: flex; align-items: center; justify-content: center; background: #fbfbfb; }
.vbar .down { border: 0; border-top: 1px solid #b4b4b4; }
.btn::before { content: ""; border: 4px solid transparent; }
.btn.up::before { border-top: 0; border-bottom-color: #555; }
.btn.down::before { border-bottom: 0; border-top-color: #555; margin-bottom: 1px; }
.btn.left::before { border-left: 0; border-right-color: #555; }
.btn.right::before { border-right: 0; border-left-color: #555; }
.track { background: #e6e6e6; }
.thumb { background: linear-gradient(90deg, #fff, #f6f6f6); border: solid #b4b4b4; border-width: 1px 0; }
.t1 { height: 71px; }
.th1 { height: 30px; }
.th2 { height: 166px; border-top: 0; }
.grow { flex: 1; }
.hbar { display: grid; grid-template-columns: 9px 173px 44px 13px; border-top: 1px solid #b4b4b4; }
.hbar .btn { display: flex; align-items: center; justify-content: center; background: #fbfbfb; }
.hbar .left { border-right: 1px solid #b4b4b4; padding-right: 5px; }
.hbar .right { border-left: 1px solid #b4b4b4; }
.hbar .thumb { border-width: 0 1px 0 0; background: linear-gradient(#fff, #f6f6f6); }
.corner { border: solid #b4b4b4; border-width: 1px 0 0 1px; background: #f0f0f0; }
.split { flex: none; height: 5px; width: 18px; margin-left: 116px; background: radial-gradient(circle at 1px 1px, #aaa .6px, transparent .9px) 0 1px / 3px 4px; }
.vsplit { background: linear-gradient(#f0f0f0, #f0f0f0) 0 0 / 100% 287px no-repeat, linear-gradient(#f0f0f0, #f0f0f0) 0 305px / 100% 400px no-repeat, repeating-linear-gradient(#aaa 0 1px, #f0f0f0 1px 3px) 3px 0 / 1px 100% no-repeat; }

.layers { flex: 1; min-height: 0; border: solid #b4b4b4; border-width: 1px 1px 0 0; display: grid; grid-template-columns: 239px 14px; background: #fff; }
.rows li { height: 18px; padding: 0 5px 0 18px; display: flex; align-items: center; font-size: 11.5px; line-height: 16px; white-space: nowrap; }
.chk { flex: none; width: 14px; height: 14px; border: 1px solid #bebebe; background: #fff; margin-right: 6px; }
.chk.on::before { content: ""; display: block; width: 5px; height: 8px; margin: 0 0 0 3px; border: solid #000; border-width: 0 2px 2px 0; transform: rotate(38deg) skewY(8deg); }
.sym { width: 16px; height: 16px; margin-right: 3px; flex: none; }
.rows em, .rows strong { flex: 1; padding: 2px 0 0 3px; font-weight: bold; letter-spacing: -.15px; }
.rows em { font-style: italic; color: #808080; letter-spacing: .1px; }
.rows .wide { letter-spacing: .25px; }
.rows .sel { background: #0078d7; color: #fff; }
.sel strong { background: #1a83dc; letter-spacing: -.05px; }
.mem { width: 16px; height: 16px; border: 1px solid #dcdcdc; background: #f6f6f6; color: #6c6c6c; display: flex; align-items: center; justify-content: center; }
.mem svg { flex: none; width: 13px; height: 11px; }
.sel .mem { color: #5c87ad; }

.canvas { background: #fff; border: solid #a9a9a9; border-width: 1px 0 0 1px; margin-top: 1px; overflow: hidden; }
.canvas svg { display: block; }
```
